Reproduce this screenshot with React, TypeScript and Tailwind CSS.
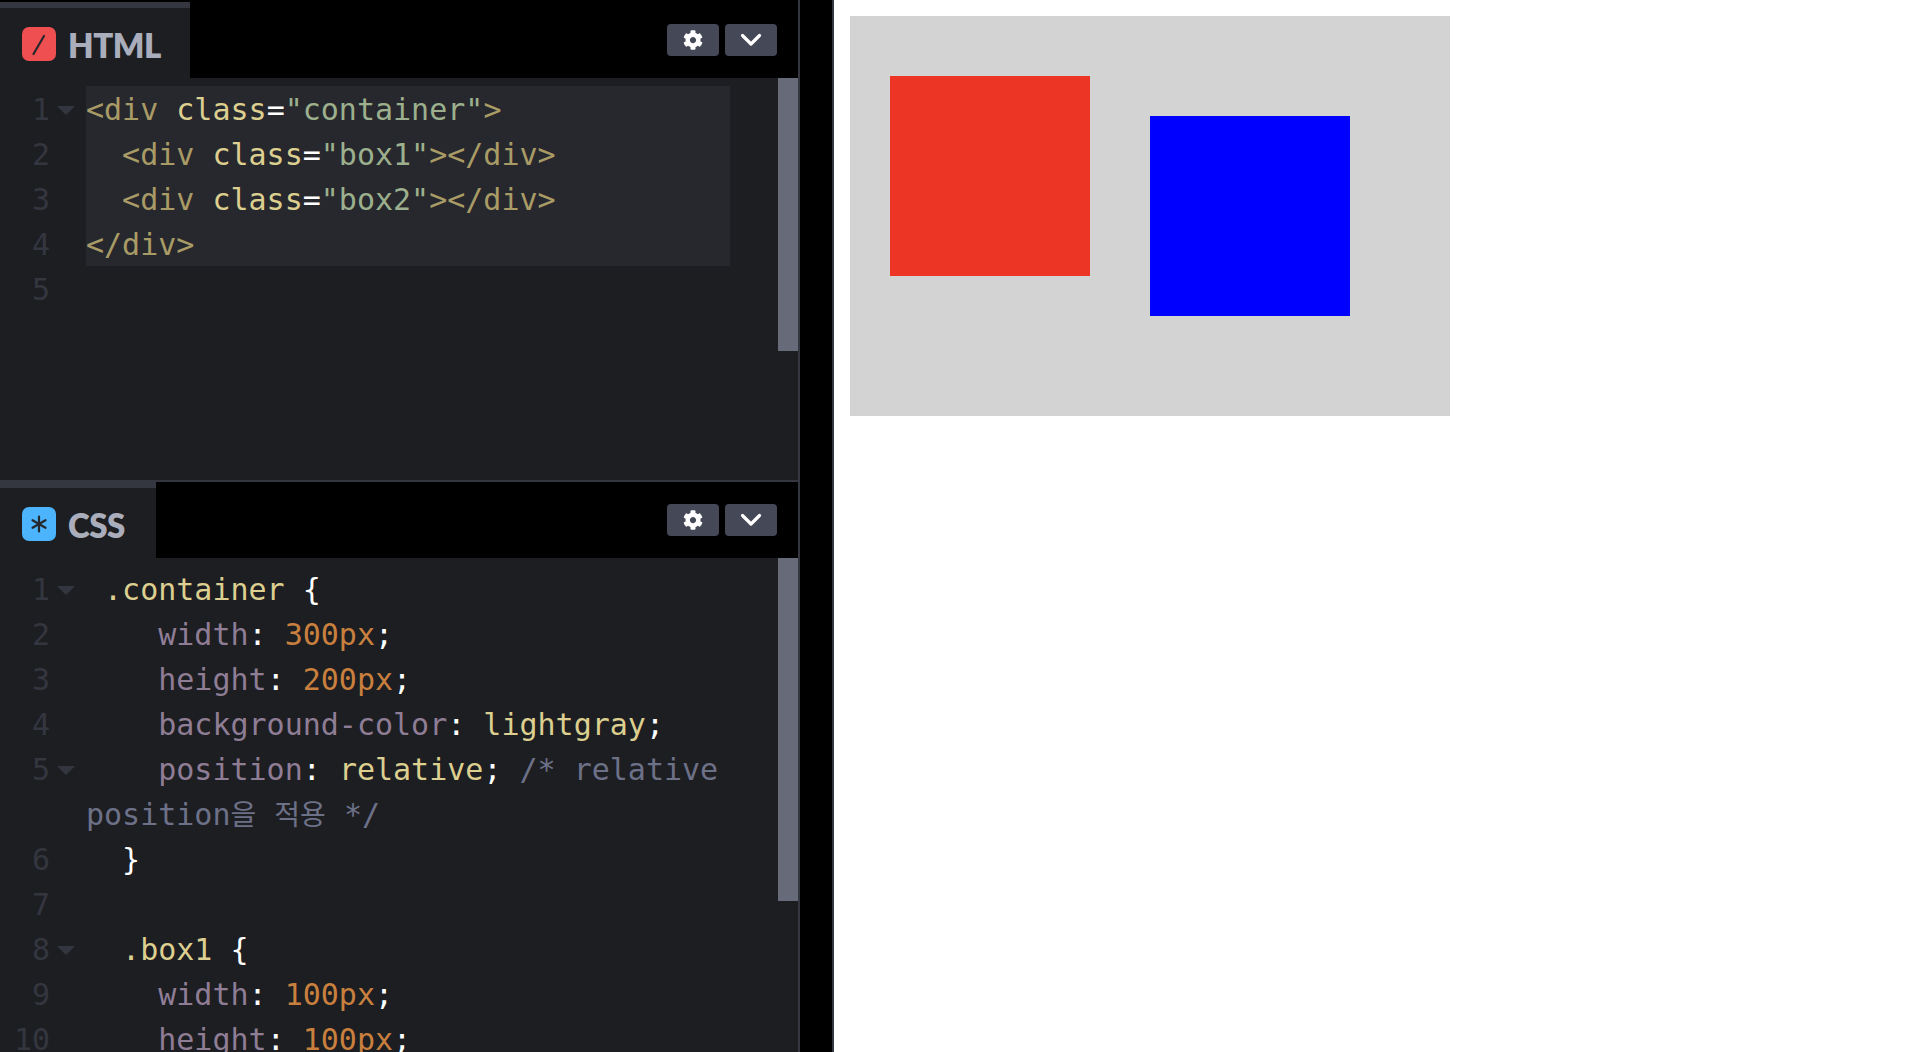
import React from 'react';
import { FaCog } from 'react-icons/fa';

type Token = [string, string];

const TAG = 'text-[#a99b66]';
const ATTR = 'text-[#dccf8f]';
const STR = 'text-[#9cb08e]';
const WHITE = 'text-white';
const PROP = 'text-[#8f7d95]';
const NUM = 'text-[#c9803e]';
const COMMENT = 'text-[#6d7188]';
const COMMENT_KO = 'text-[#6d7188] text-[28px]';

type Line = { num?: number; fold?: boolean; tokens: Token[] };

const htmlLines: Line[] = [
  { num: 1, fold: true, tokens: [['<div ', TAG], ['class', ATTR], ['=', WHITE], ['"container"', STR], ['>', TAG]] },
  { num: 2, tokens: [['  <div ', TAG], ['class', ATTR], ['=', WHITE], ['"box1"', STR], ['></div>', TAG]] },
  { num: 3, tokens: [['  <div ', TAG], ['class', ATTR], ['=', WHITE], ['"box2"', STR], ['></div>', TAG]] },
  { num: 4, tokens: [['</div>', TAG]] },
];

const cssLines: Line[] = [
  { num: 1, fold: true, tokens: [[' .container ', ATTR], ['{', WHITE]] },
  { num: 2, tokens: [['    width', PROP], [': ', WHITE], ['300px', NUM], [';', WHITE]] },
  { num: 3, tokens: [['    height', PROP], [': ', WHITE], ['200px', NUM], [';', WHITE]] },
  { num: 4, tokens: [['    background-color', PROP], [': ', WHITE], ['lightgray', ATTR], [';', WHITE]] },
  { num: 5, fold: true, tokens: [['    position', PROP], [': ', WHITE], ['relative', ATTR], ['; ', WHITE], ['/* relative', COMMENT]] },
  { tokens: [['position', COMMENT], ['을', COMMENT_KO], [' ', COMMENT], ['적용', COMMENT_KO], [' */', COMMENT]] },
  { num: 6, tokens: [['  }', WHITE]] },
  { num: 7, tokens: [] },
  { num: 8, fold: true, tokens: [['  .box1 ', ATTR], ['{', WHITE]] },
  { num: 9, tokens: [['    width', PROP], [': ', WHITE], ['100px', NUM], [';', WHITE]] },
  { num: 10, tokens: [['    height', PROP], [': ', WHITE], ['100px', NUM], [';', WHITE]] },
];

const CodeLine = ({ line }: { line: Line }) => (
  <div className="flex h-[45px] leading-[45px]">
    <div className="relative w-[86px] shrink-0">
      <span className="block w-[50px] text-right text-[#34363f]">{line.num}</span>
      {line.fold && (
        <span className="absolute left-[57px] top-[19px] h-0 w-0 border-x-[9px] border-t-[9px] border-x-transparent border-t-[#34363f]" />
      )}
    </div>
    <div className="whitespace-pre">
      {line.tokens.map(([text, color], i) => (
        <span key={i} className={color}>{text}</span>
      ))}
    </div>
  </div>
);

const Buttons = () => (
  <div className="flex gap-[6px] pr-[21px] pt-[22px]">
    <div className="flex h-[32px] w-[52px] items-center justify-center rounded-[4px] bg-[#444857]">
      <FaCog className="h-[20px] w-[20px] text-white" />
    </div>
    <div className="flex h-[32px] w-[52px] items-center justify-center rounded-[4px] bg-[#444857]">
      <svg width="22" height="14" viewBox="0 0 22 14" fill="none">
        <path d="M2.5 2.5 L11 11 L19.5 2.5" stroke="white" strokeWidth="3.2" strokeLinecap="round" strokeLinejoin="round" />
      </svg>
    </div>
  </div>
);

const Header = ({ title, tabWidth, icon }: { title: string; tabWidth: string; icon: React.ReactNode }) => (
  <div className="flex h-[76px] shrink-0 justify-between bg-black">
    <div className={`${tabWidth} border-t-[6px] border-[#343640] bg-[#1d1e22]`}>
      <div className="flex items-center gap-[12px] pl-[22px] pt-[18px]">
        {icon}
        <span className="mt-[2px] font-['Lato'] text-[33px] leading-[34px] font-extrabold tracking-[-0.5px] text-[#aaaebc]">{title}</span>
      </div>
    </div>
    <Buttons />
  </div>
);

const Scrollbar = ({ height }: { height: string }) => (
  <div className={`absolute right-0 top-0 w-[20px] bg-[#676a79] ${height}`} />
);

export default function App() {
  return (
    <div className="flex h-[1052px] w-[1910px] overflow-hidden bg-white font-['DejaVu_Sans_Mono','Noto_Sans_CJK_KR',monospace] text-[30px]">
      <div className="flex w-[800px] shrink-0 flex-col border-r-2 border-[#343640] bg-black pt-[2px]">
        {/* HTML panel */}
        <div className="flex h-[478px] shrink-0 flex-col">
          <Header
            title="HTML"
            tabWidth="w-[190px]"
            icon={
              <div className="flex h-[34px] w-[34px] items-center justify-center rounded-[7px] bg-[#ef4f50]">
                <svg width="34" height="34" viewBox="0 0 34 34">
                  <path d="M22 9 L11.5 27" stroke="#27282e" strokeWidth="2.2" strokeLinecap="round" />
                </svg>
              </div>
            }
          />
          <div className="relative flex-1 bg-[#1d1e22] pt-[9px]">
            <div className="absolute left-[86px] top-[8px] h-[180px] w-[644px] bg-[#27282d]" />
            <div className="relative">
              {htmlLines.map((line, i) => <CodeLine key={i} line={line} />)}
              <CodeLine line={{ num: 5, tokens: [] }} />
            </div>
            <Scrollbar height="h-[273px]" />
          </div>
        </div>
        <div className="h-[2px] shrink-0 bg-[#343640]" />
        {/* CSS panel */}
        <div className="flex min-h-0 flex-1 flex-col">
          <Header
            title="CSS"
            tabWidth="w-[156px]"
            icon={
              <div className="flex h-[34px] w-[34px] items-center justify-center rounded-[7px] bg-[#4cb4fc]">
                <svg width="34" height="34" viewBox="0 0 34 34">
                  <path d="M17 9.5 V24.5 M10.5 13.2 L23.5 20.8 M23.5 13.2 L10.5 20.8" stroke="#27282e" strokeWidth="2.2" strokeLinecap="round" />
                </svg>
              </div>
            }
          />
          <div className="relative flex-1 overflow-hidden bg-[#1d1e22] pt-[9px]">
            {cssLines.map((line, i) => <CodeLine key={i} line={line} />)}
            <Scrollbar height="h-[343px]" />
          </div>
        </div>
      </div>
      <div className="w-[32px] shrink-0 bg-black" />
      <div className="flex-1 border-l-2 border-[#343640] bg-white pl-[16px] pt-[16px]">
        <div className="flex h-[400px] w-[600px] items-start bg-[#d3d3d3] pl-[40px] pt-[60px]">
          <div className="h-[200px] w-[200px] bg-[#ec3524]" />
          <div className="ml-[60px] mt-[40px] h-[200px] w-[200px] bg-[#0000ff]" />
        </div>
      </div>
    </div>
  );
}
